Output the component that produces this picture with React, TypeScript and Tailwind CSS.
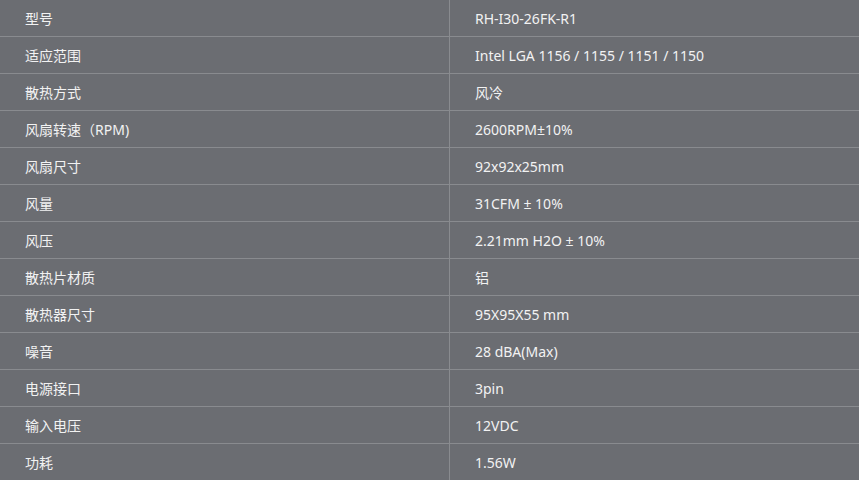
import React from "react";

const rows: [string, string][] = [
  ["型号", "RH-I30-26FK-R1"],
  ["适应范围", "Intel LGA 1156 / 1155 / 1151 / 1150"],
  ["散热方式", "风冷"],
  ["风扇转速（RPM)", "2600RPM±10%"],
  ["风扇尺寸", "92x92x25mm"],
  ["风量", "31CFM ± 10%"],
  ["风压", "2.21mm H2O ± 10%"],
  ["散热片材质", "铝"],
  ["散热器尺寸", "95X95X55 mm"],
  ["噪音", "28 dBA(Max)"],
  ["电源接口", "3pin"],
  ["输入电压", "12VDC"],
  ["功耗", "1.56W"],
];

export default function App() {
  return (
    <div
      className="w-[859px] h-[480px] overflow-hidden bg-[#6b6d72] text-[#f2f2f2] text-[14px]"
      style={{ fontFamily: '"Noto Sans", "Noto Sans CJK SC", sans-serif' }}
    >
      {rows.map(([k, v], i) => (
        <div key={i} className="flex h-[37px] border-b border-[#898b8f]">
          <div className="w-[450px] border-r border-[#898b8f] flex items-center pl-[25px]">{k}</div>
          <div className="flex-1 flex items-center pl-[25px]">{v}</div>
        </div>
      ))}
    </div>
  );
}
